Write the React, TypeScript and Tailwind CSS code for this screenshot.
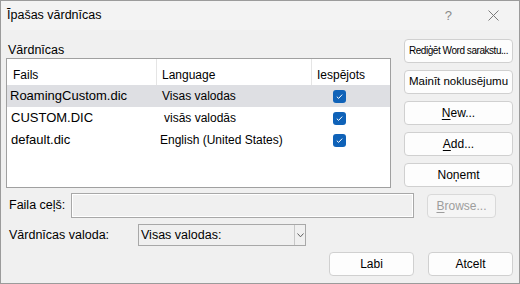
import { useState } from "react";

type Dict = { file: string; lang: string; langPad: string; filePad: string; enabled: boolean };

const dicts: Dict[] = [
  { file: "RoamingCustom.dic", filePad: "pl-[3px]", lang: "Visas valodas", langPad: "pl-[5px]", enabled: true },
  { file: "CUSTOM.DIC", filePad: "pl-[4px]", lang: "visās valodās", langPad: "pl-[7px]", enabled: true },
  { file: "default.dic", filePad: "pl-[4px]", lang: "English (United States)", langPad: "pl-[3px]", enabled: true },
];

const Check = () => (
  <span className="flex h-[13px] w-[13px] items-center justify-center rounded-[3px] bg-[#0f62b8]">
    <svg width="9" height="9" viewBox="0 0 9 9">
      <path d="M1.8 4.7 L3.6 6.4 L7.2 2.6" fill="none" stroke="#ffffff" strokeWidth="1" />
    </svg>
  </span>
);

const Btn = ({
  children,
  className = "",
  disabled = false,
}: {
  children: React.ReactNode;
  className?: string;
  disabled?: boolean;
}) => (
  <button
    className={
      "flex h-[24px] items-center justify-center overflow-hidden whitespace-nowrap rounded-[4px] border leading-none " +
      (disabled
        ? "border-[#d9d9d9] bg-[#f5f5f5] text-[#9d9d9d] "
        : "border-[#d0d0d0] bg-[#fdfdfd] text-black ") +
      className
    }
  >
    {children}
  </button>
);

export default function App() {
  const [selected, setSelected] = useState(0);

  return (
    <div
      className="flex h-[284px] w-[520px] flex-col border border-[#9b9b9b] bg-[#f0f0f0] text-[12px] text-black"
      style={{ fontFamily: '"Liberation Sans", Arial, sans-serif' }}
    >
      {/* title bar */}
      <div className="flex h-[29px] shrink-0 items-center bg-[#f3f3f3] pl-[6px] text-[12.5px]">
        <span className="flex-1">Īpašas vārdnīcas</span>
        <span className="mr-[36px] text-[13px] text-[#8a8a8a]">?</span>
        <svg width="11" height="11" viewBox="0 0 11 11" className="mr-[20px]">
          <path d="M0.5 0.5 L10.5 10.5 M10.5 0.5 L0.5 10.5" stroke="#7a7a7a" strokeWidth="1" />
        </svg>
      </div>

      <div className="flex flex-col pl-[5px] pr-[6px]">
        {/* list + side buttons */}
        <div className="mt-[9px] flex justify-between">
          <div className="flex w-[385px] flex-col">
            <div className="h-[19px] pl-[2px] pt-[3px] text-[12.5px] leading-[16px]">Vārdnīcas</div>
            <div className="h-[130px] border border-[#a0a0a0] bg-white">
              <div className="flex h-[26px] text-[12px] leading-[16px]">
                <div className="w-[150px] border-r border-[#e5e5e5] pl-[6px] pt-[8px]">Fails</div>
                <div className="w-[155px] border-r border-[#e5e5e5] pl-[5px] pt-[8px]">Language</div>
                <div className="flex-1 pl-[5px] pt-[8px]">Iespējots</div>
              </div>
              {dicts.map((d, i) => (
                <div
                  key={d.file}
                  onClick={() => setSelected(i)}
                  className={
                    "flex h-[22px] items-center " + (selected === i ? "bg-[#dedfe3]" : "")
                  }
                >
                  <div className={"w-[150px] whitespace-nowrap text-[13px] " + d.filePad}>{d.file}</div>
                  <div className={"w-[155px] whitespace-nowrap text-[12px] " + d.langPad}>{d.lang}</div>
                  <div className="flex-1 pl-[21px]">
                    <Check />
                  </div>
                </div>
              ))}
            </div>
          </div>
          <div className="flex w-[109px] flex-col gap-[7px]">
            <Btn className="px-[2px] text-[10px] tracking-[-0.45px]">Rediģēt Word sarakstu...</Btn>
            <Btn className="text-[11.5px]">Mainīt noklusējumu</Btn>
            <Btn>
              <u className="underline-offset-2">N</u>ew...
            </Btn>
            <Btn>
              <u className="underline-offset-2">A</u>dd...
            </Btn>
            <Btn>Noņemt</Btn>
          </div>
        </div>

        {/* file path */}
        <div className="mt-[5px] flex items-center">
          <span className="w-[65px] whitespace-nowrap pl-[3px] text-[12.5px]">Faila ceļš:</span>
          <div className="h-[25px] w-[343px] border border-[#a8a8a8] bg-[#f0f0f0] shadow-[inset_0_0_0_1px_#ffffff]" />
          <Btn disabled className="ml-[13px] w-[69px]">
            <u className="underline-offset-2">B</u>rowse...
          </Btn>
        </div>

        {/* language */}
        <div className="mt-[6px] flex items-center">
          <span className="w-[132px] whitespace-nowrap pl-[3px] text-[12.5px]">Vārdnīcas valoda:</span>
          <div className="flex h-[22px] w-[168px] items-center border border-[#a8a8a8] bg-[#f0f0f0] text-[12.5px]">
            <span className="flex-1 pl-[2px]">Visas valodas:</span>
            <span className="flex h-full w-[11px] items-center justify-center border-l border-[#c8c8c8]">
              <svg width="7" height="5" viewBox="0 0 7 5">
                <path d="M0.5 0.5 L3.5 3.8 L6.5 0.5" fill="none" stroke="#606060" strokeWidth="1" />
              </svg>
            </span>
          </div>
        </div>

        {/* ok / cancel */}
        <div className="mt-[6px] flex justify-end gap-[14px]">
          <Btn className="w-[85px]">Labi</Btn>
          <Btn className="w-[85px]">Atcelt</Btn>
        </div>
      </div>
    </div>
  );
}
